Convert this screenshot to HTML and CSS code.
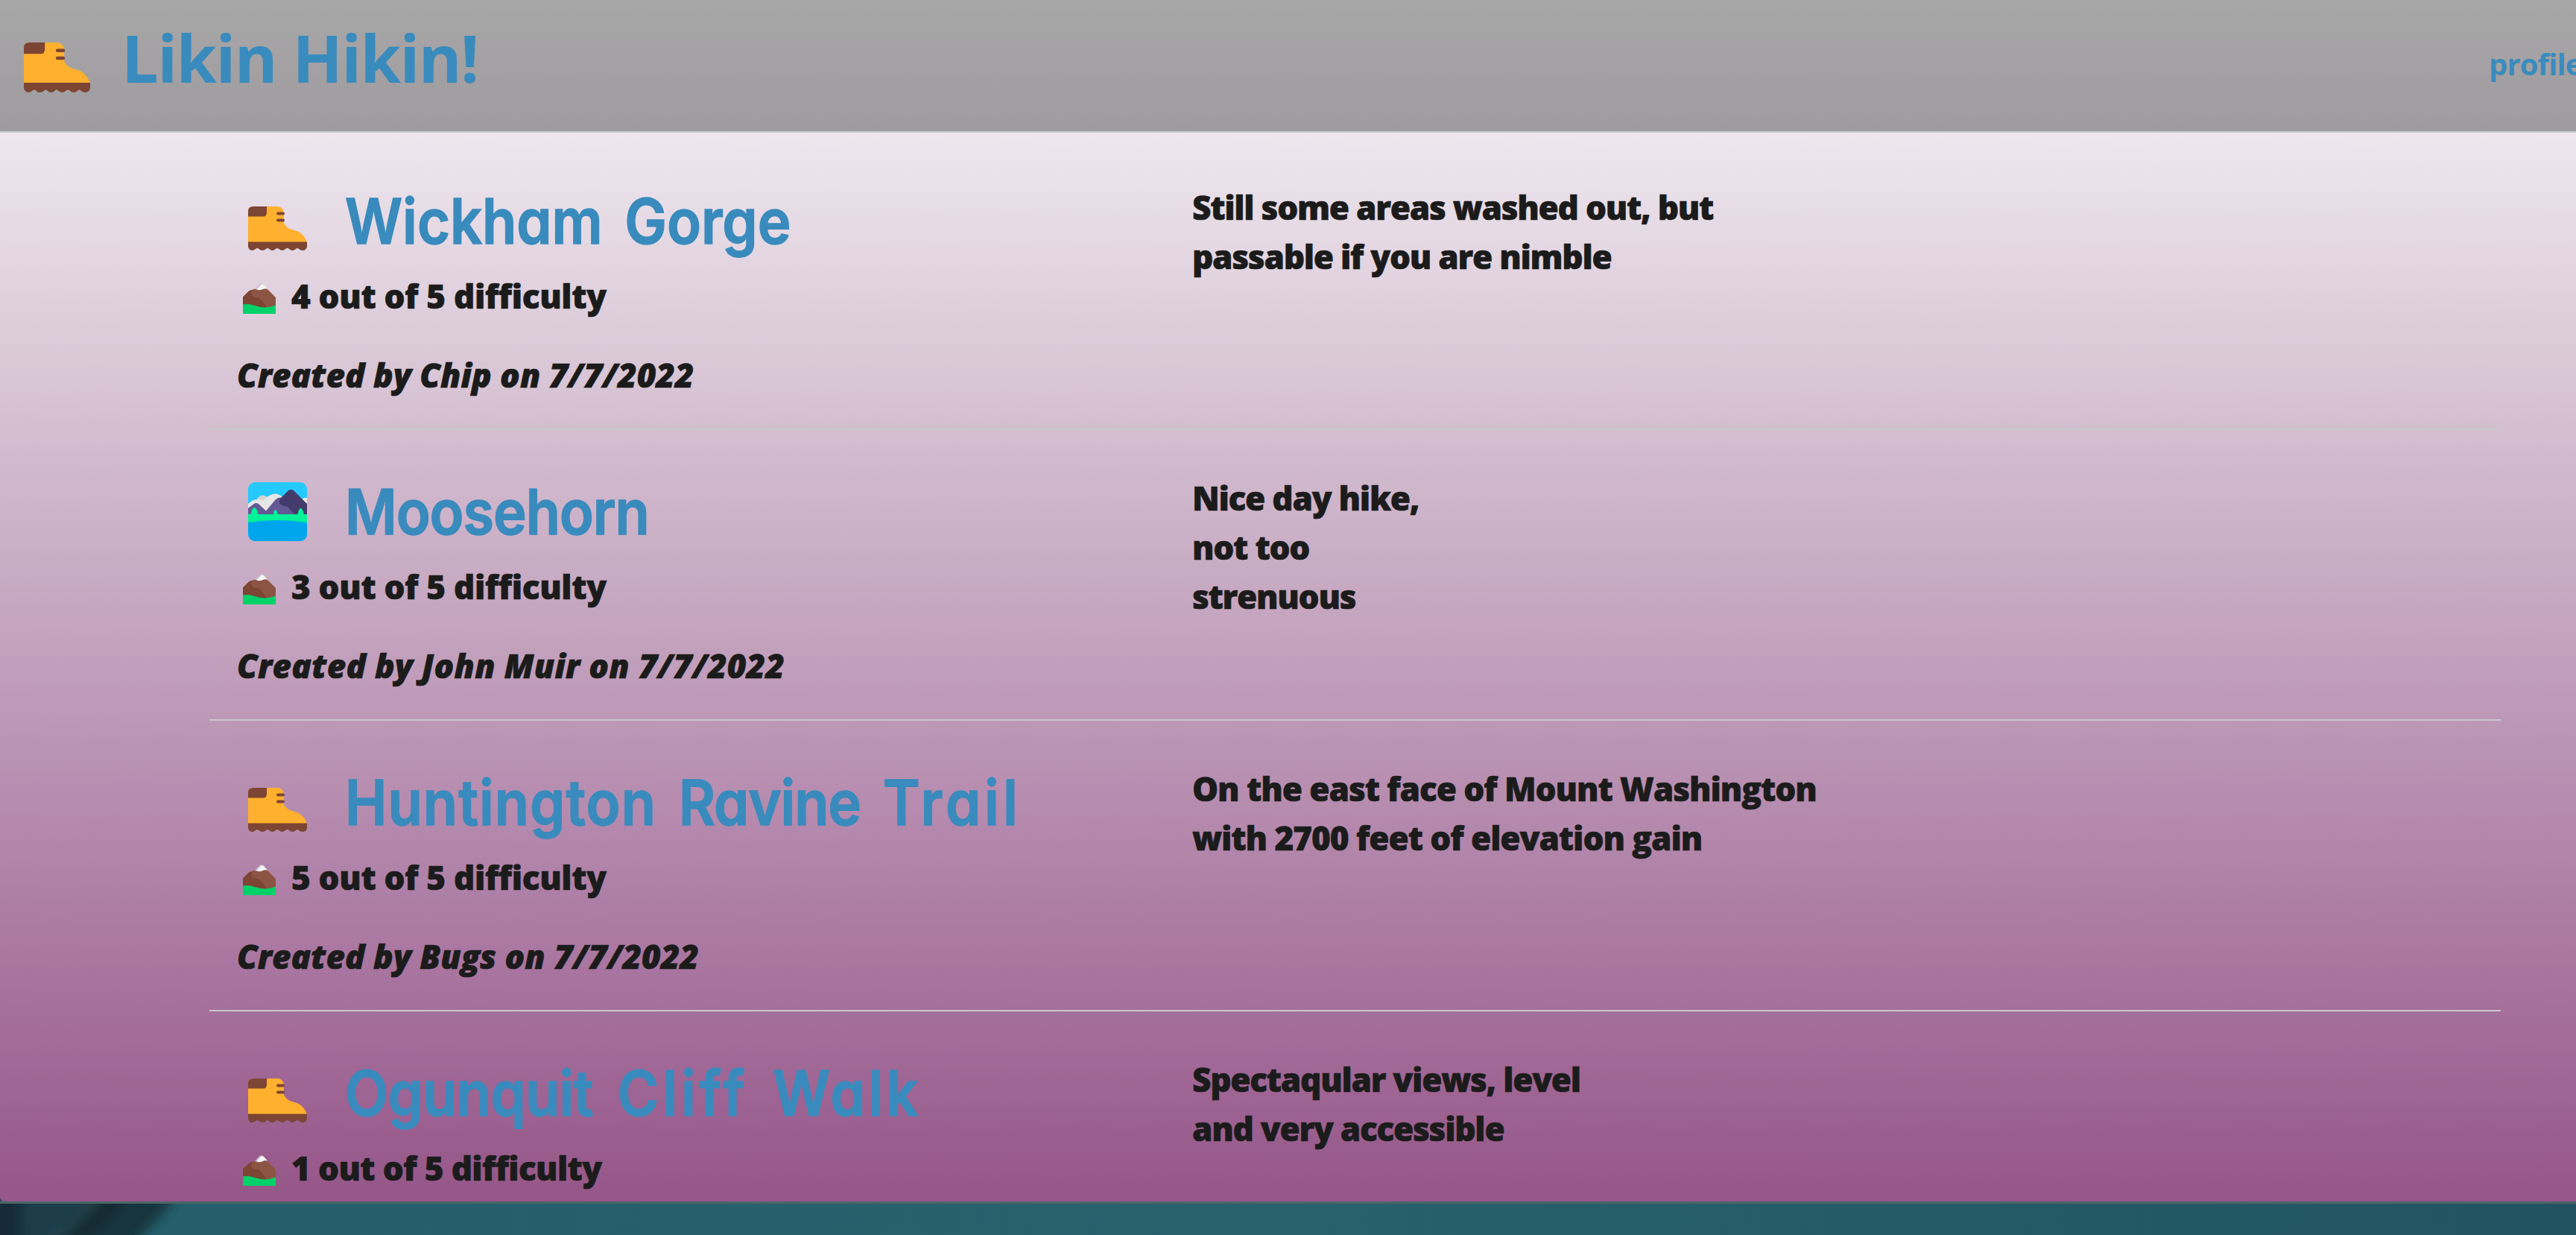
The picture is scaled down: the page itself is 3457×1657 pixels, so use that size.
FILE: index.html
```
<!DOCTYPE html>
<html lang="en">
<head>
<meta charset="utf-8">
<title>Likin Hikin!</title>
<link rel="stylesheet" href="styles.css">
</head>
<body>
<svg class="sprite" aria-hidden="true">
  <symbol id="boot" viewBox="0 0 79 79">
    <path fill="#ffb02e" d="M0 27Q0 20 7 20H39Q47 20 48 29V42C54 54 64 49 72 57Q79 64 79 71H0Z"/>
    <path fill="#7d4533" d="M0 33.500V26Q0 20 7 20H25V29Q24 33.500 21 33.500Z"/>
    <rect fill="#7d4533" x="38" y="27.500" width="11" height="4" rx="2"/>
    <rect fill="#7d4533" x="38" y="36.500" width="11" height="4" rx="2"/>
    <path fill="#7d4533" d="M0 67.500H79V74Q78 79 73 79Q70 79 68 77Q66 75 64 77Q62 79 59.500 79Q57 79 55 77Q52.500 75 50 77Q48 79 46 79Q43.500 79 41 77Q39 75 37 77Q35 79 32.500 79Q30 79 28 77Q26 75 24 77Q22 79 19 79Q16.500 79 14.500 77Q12 75 10 77Q8 79 5.500 79Q1 79 0 74Z"/>
  </symbol>
  <symbol id="peak" viewBox="0 0 44 41">
    <path fill="#8c5543" d="M0 32V18.500L7.500 11Q9 9.500 12 9L16 7.500H32Q33 8 34 9L44 19V32Z"/>
    <path fill="#7d4533" d="M0 32V18.500L7.500 11Q9 9.500 14 9Q10 12 12 16Q14 19 20 19Q22 20 24 22L32 31.500V35H0Z"/>
    <path fill="#cdc4d6" d="M16 8L22.500 1Q24.500 -.6 27 1L24 9Z"/>
    <path fill="#f4f4f4" d="M18.500 8.500L24.500 2Q26.500 .5 28 2L33 7.500Q29 6.500 27 8Q23 10 18.500 8.500Z"/>
    <path fill="#00d26a" d="M0 28.500Q8 27 16 30Q30 35 44 29.500V41H0Z"/>
  </symbol>
  <clipPath id="lake-frame"><rect width="79" height="79" rx="9.500"/></clipPath>
  <symbol id="lake" viewBox="0 0 79 79">
    <g clip-path="url(#lake-frame)">
      <rect width="79" height="79" fill="#26c9fc"/>
      <path fill="#d3d3d3" d="M10 26Q14 17 20 17.500Q26 18 28 24V34H10Z"/>
      <path fill="#e6e6e6" d="M0 29Q6 23 12 23Q18 24 21 24L28 18Q38 12 46 20V42H0ZM72 23Q75 20 79 21V34H72Z"/>
      <path fill="#635994" d="M0 35L7 29.500Q11.500 26.500 15 30L24 38.500L37 23Q42 18.500 48 22L64 43H0Z"/>
      <path fill="#433b6b" d="M43 22L52 13Q57.500 6.500 63 13L79 29V43H62L53 33Q46 31.500 43.500 30Q41 27 43 22Z"/>
      <path fill="#00f397" d="M0 43L4 42.500Q5 34 8.500 34Q12 35 13.500 43H34Q34.500 37 37 37Q39 38 39.500 43H66.500Q68 35 70.500 35Q73 35 75 43H79V56H0Z"/>
      <path fill="#00a6ed" d="M0 54Q40 48 79 54V79H0Z"/>
    </g>
  </symbol>
</svg>

<main class="page">
  <header class="topbar">
    <a class="brand"><svg class="brand-icon" viewBox="0 20 79 59" preserveAspectRatio="none"><use href="#boot" width="79" height="79"/></svg><span class="brand-name">Likin Hikin!</span></a>
    <a class="nav-link">profile</a>
  </header>
  <section class="trails">
    <article class="trail">
      <div class="info">
        <h2 class="name"><svg class="icon"><use href="#boot"/></svg><span class="title title-roomy">Wickham Gorge</span></h2>
        <p class="level"><svg class="mini"><use href="#peak"/></svg><span>4 out of 5 difficulty</span></p>
        <p class="author">Created by Chip on 7/7/2022</p>
      </div>
      <p class="about">Still some areas washed out, but<br>passable if you are nimble</p>
    </article>
    <article class="trail">
      <div class="info">
        <h2 class="name"><svg class="icon"><use href="#lake"/></svg><span class="title tight">Moosehorn</span></h2>
        <p class="level"><svg class="mini"><use href="#peak"/></svg><span>3 out of 5 difficulty</span></p>
        <p class="author author-wide">Created by John Muir on 7/7/2022</p>
      </div>
      <p class="about">Nice day hike,<br>not too<br>strenuous</p>
    </article>
    <article class="trail">
      <div class="info">
        <h2 class="name"><svg class="icon"><use href="#boot"/></svg><span class="title title-roomy"><span class="loose">Huntington</span> <span class="tight">Ravine</span> <span class="wide">Trail</span></span></h2>
        <p class="level"><svg class="mini"><use href="#peak"/></svg><span>5 out of 5 difficulty</span></p>
        <p class="author">Created by Bugs on 7/7/2022</p>
      </div>
      <p class="about about-long">On the east face of Mount Washington<br>with 2700 feet of elevation gain</p>
    </article>
    <article class="trail">
      <div class="info">
        <h2 class="name"><svg class="icon"><use href="#boot"/></svg><span class="title title-airy"><span class="snug">Ogunquit</span> <span class="wide">Cliff</span> <span class="broad">Walk</span></span></h2>
        <p class="level level-tight"><svg class="mini"><use href="#peak"/></svg><span>1 out of 5 difficulty</span></p>
      </div>
      <p class="about">Spectaqular views, level<br>and very accessible</p>
    </article>
  </section>
</main>
<footer class="water">
  <svg class="shore" viewBox="0 0 300 42">
    <defs>
      <filter id="soft" x="-20%" y="-50%" width="140%" height="200%"><feGaussianBlur stdDeviation="8"/></filter>
    </defs>
    <g filter="url(#soft)">
      <path fill="#19343d" d="M-40 -40H254L220 12L190 42L160 80H-40Z"/>
      <path fill="#1a3d4a" d="M34 -40H130L100 30L60 80H30Z"/>
      <path fill="#27454f" d="M122 -10L136 -10L112 28L70 50H50L95 26Z"/>
      <path fill="#142c33" d="M138 -10H180L140 30L110 50H80Z"/>
      <path fill="#122b38" d="M-40 -40H28L24 80H-40Z"/>
    </g>
  </svg>
</footer>
</body>
</html>
```
FILE: styles.css
```
* { box-sizing: border-box; }
html, body { height: 100%; }
body {
  margin: 0;
  overflow: hidden;
  background: #2c4850;
  color: #1b1b1b;
  font-family: "Open Sans", "Noto Sans", sans-serif;
}
h2, p { margin: 0; }
.sprite { position: absolute; width: 0; height: 0; }
.page {
  height: 1612px;
  overflow: hidden;
  border-bottom-left-radius: 6px;
  background: linear-gradient(#fafafa 0, #eee7ee 178px, #d4bfd1 570px, #bd98b7 960px, #a6719d 1340px, #955688 1612px);
}
.topbar {
  display: flex;
  justify-content: space-between;
  height: 178px;
  border-bottom: 2px solid #c8c8ca;
  background: rgba(0, 0, 0, .33);
  background-clip: padding-box;
  color: #3a8bbd;
  font-weight: 700;
}
.brand { display: flex; padding: 0 0 0 32px; white-space: nowrap; }
.brand-icon { width: 89px; height: 67px; margin: 57px 42px 0 0; }
.brand-name { padding-top: 17px; font-size: 88px; line-height: 120px; letter-spacing: -1.55px; }
.nav-link { width: 117px; padding-top: 56px; font-size: 40px; line-height: 60px; letter-spacing: -.9px; white-space: nowrap; }
.trails { margin: 9px 101px 0 281px; }
.trail {
  display: grid;
  grid-template-columns: 1319px 1fr;
  height: 390px;
  border-bottom: 2px solid #c9c9cb;
  font-size: 44px;
  line-height: 66px;
  font-weight: 800;
  -webkit-text-stroke: .7px #1b1b1b;
}
.info { padding: 52px 0 0 37px; }
.name {
  display: flex;
  align-items: center;
  height: 115px;
  padding-left: 15px;
  color: #3a8bbd;
  font: 600 84px/115px Inter, sans-serif;
  font-feature-settings: "cv11";
  -webkit-text-stroke: 1.5px #3a8bbd;
  white-space: nowrap;
}
.title { transform: scaleX(.9); transform-origin: 0 50%; }
.title-roomy { word-spacing: 12px; }
.title-airy { word-spacing: 15px; }
.tight { letter-spacing: -1.2px; }
.snug { letter-spacing: -.7px; }
.loose { letter-spacing: 1.2px; }
.wide { letter-spacing: 5.6px; }
.broad { letter-spacing: 4.4px; }
.icon { width: 79px; height: 79px; margin: 0 51px 0 0; }
.level { display: flex; height: 66px; padding-left: 8px; letter-spacing: -.3px; }
.level-tight { letter-spacing: -.6px; }
.mini { width: 44px; height: 41px; margin: 26px 21px 0 0; }
.level span, .author { white-space: nowrap; }
.level span { padding-top: 10px; }
.author { padding-top: 50px; font-style: italic; letter-spacing: .05px; }
.author-wide { letter-spacing: .28px; }
.about { padding-top: 58px; letter-spacing: -1.2px; white-space: nowrap; }
.about-long { letter-spacing: -1px; }
.water {
  height: 45px;
  border-top: 3px solid #4a6569;
  background: linear-gradient(90deg, #265f6b 260px, #27616c 50%, #22545f 100%);
}
.shore { display: block; width: 300px; height: 42px; }
```
